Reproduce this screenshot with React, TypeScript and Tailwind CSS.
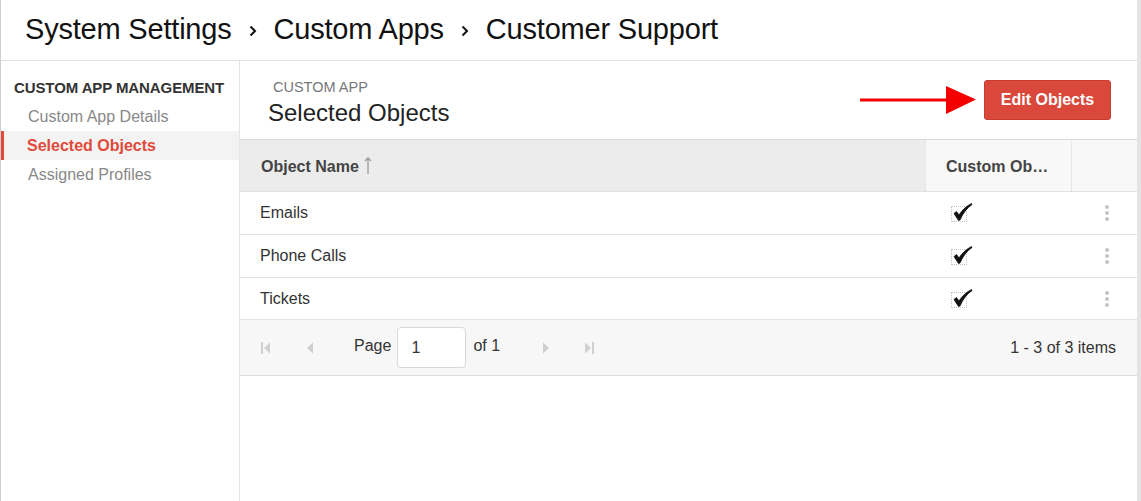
import React from 'react'

const rows = ['Emails', 'Phone Calls', 'Tickets']

function Chevron() {
  return (
    <svg width="10" height="14" viewBox="0 0 10 14" className="mx-[16px] mt-[2px]">
      <path d="M2.5 2.5 L7 7 L2.5 11.5" fill="none" stroke="#111" strokeWidth="2" />
    </svg>
  )
}

function Check() {
  return (
    <div className="relative w-[16px] h-[16px] border border-dotted border-[#c4c4c4] ml-[5px]">
      <svg width="22" height="20" viewBox="0 0 22 20" className="absolute left-[0px] -top-[5px]">
        <path
          d="M2 11.5 L4.5 9.5 L7 13 C10 8 14 4.5 19.5 1.5 L20 2.5 C15 6 11 11 8 18 L6.5 18.5 Z"
          fill="#111"
          stroke="#111"
          strokeWidth="0.8"
          strokeLinejoin="round"
        />
      </svg>
    </div>
  )
}

function Kebab() {
  return (
    <div className="flex flex-col gap-[2px] items-center">
      <span className="w-[4px] h-[4px] rounded-full bg-[#c4c4c4]" />
      <span className="w-[4px] h-[4px] rounded-full bg-[#c4c4c4]" />
      <span className="w-[4px] h-[4px] rounded-full bg-[#c4c4c4]" />
    </div>
  )
}

function PagerIcon({ kind }: { kind: 'first' | 'prev' | 'next' | 'last' }) {
  return (
    <svg width="12" height="16" viewBox="0 0 12 16">
      {kind === 'first' && (
        <>
          <rect x="1" y="2" width="2" height="12" fill="#cfcfcf" />
          <path d="M10 2.5 L4 8 L10 13.5 Z" fill="#cfcfcf" />
        </>
      )}
      {kind === 'prev' && <path d="M9 2.5 L3 8 L9 13.5 Z" fill="#cfcfcf" />}
      {kind === 'next' && <path d="M3 2.5 L9 8 L3 13.5 Z" fill="#cfcfcf" />}
      {kind === 'last' && (
        <>
          <path d="M2 2.5 L8 8 L2 13.5 Z" fill="#cfcfcf" />
          <rect x="9" y="2" width="2" height="12" fill="#cfcfcf" />
        </>
      )}
    </svg>
  )
}

export default function App() {
  return (
    <div
      className="w-[1141px] h-[501px] bg-white border-l border-[#cfcfcf] border-r-4 border-r-[#e4e4e4] flex flex-col overflow-hidden"
      style={{ fontFamily: '"Liberation Sans", Arial, sans-serif' }}
    >
      {/* Breadcrumb */}
      <div className="h-[61px] shrink-0 border-b border-[#e2e2e2] flex items-center pl-[24px] text-[29px] text-[#111] tracking-[-0.2px]">
        <span>System Settings</span>
        <Chevron />
        <span>Custom Apps</span>
        <Chevron />
        <span>Customer Support</span>
      </div>

      <div className="flex flex-1">
        {/* Sidebar */}
        <div className="w-[239px] shrink-0 border-r border-[#e4e4e4] pt-[13px]">
          <div className="h-[28px] flex items-center pl-[13px] text-[15px] font-bold text-[#333] uppercase tracking-[-0.1px]">
            Custom App Management
          </div>
          <div className="h-[29px] flex items-center pl-[27px] text-[16px] text-[#888]">Custom App Details</div>
          <div className="h-[29px] flex items-center pl-[23px] text-[16px] font-bold text-[#e04a3b] bg-[#f3f3f3] border-l-[3px] border-[#e04a3b]">
            Selected Objects
          </div>
          <div className="h-[29px] flex items-center pl-[27px] text-[16px] text-[#888]">Assigned Profiles</div>
        </div>

        {/* Main */}
        <div className="flex-1 flex flex-col">
          <div className="h-[78px] flex items-center justify-between pr-[26px]">
            <div className="pl-[28px] pt-[5px]">
              <div className="text-[14.5px] text-[#777] pl-[5px] leading-[18px]">CUSTOM APP</div>
              <div className="text-[24px] text-[#222] leading-[30px] mt-[2px]">Selected Objects</div>
            </div>
            <div className="flex items-center">
              <svg width="118" height="30" viewBox="0 0 118 30" className="mr-[6px]">
                <rect x="0" y="13.5" width="90" height="3" fill="#f40000" />
                <path d="M86 1 L116 14.5 L86 29 Z" fill="#f40000" />
              </svg>
              <button className="w-[127px] h-[40px] rounded-[3px] bg-[#d9483b] border border-[#c53d31] text-white font-bold text-[16px]">
                Edit Objects
              </button>
            </div>
          </div>

          {/* Table */}
          <div className="border-t border-[#dcdcdc]">
            <div className="h-[52px] flex text-[16px] font-bold text-[#444] border-b border-[#e2e2e2]">
              <div className="flex-1 bg-[#ececec] flex items-center pl-[21px] pt-[3px] gap-[5px]">
                Object Name
                <svg width="8" height="18" viewBox="0 0 8 18" className="-mt-[3px]">
                  <path d="M4 1 L4 17 M1 4 L4 1 L7 4" fill="none" stroke="#9a9a9a" strokeWidth="1.3" />
                </svg>
              </div>
              <div className="w-[146px] bg-[#f8f8f8] border-l border-dotted border-[#d6d6d6] flex items-center pl-[20px] pt-[3px]">
                Custom Ob…
              </div>
              <div className="w-[66px] bg-[#f8f8f8] border-l border-dotted border-[#d6d6d6]" />
            </div>
            {rows.map((r, i) => (
              <div
                key={r}
                className={`${i === 2 ? 'h-[42px]' : 'h-[43px]'} flex items-center border-b border-[#e2e2e2] text-[16px] text-[#333]`}
              >
                <div className="flex-1 pl-[20px]">{r}</div>
                <div className="w-[146px] pl-[21px] pt-[2px]">
                  <Check />
                </div>
                <div className="w-[66px] flex justify-end pr-[28px]">
                  <Kebab />
                </div>
              </div>
            ))}
            <div className="h-[56px] bg-[#f7f7f7] border-b border-[#dcdcdc] flex items-center text-[16px] text-[#333] pr-[21px]">
              <div className="w-[46px] flex justify-center pl-[6px]">
                <PagerIcon kind="first" />
              </div>
              <div className="w-[46px] flex justify-center pl-[2px]">
                <PagerIcon kind="prev" />
              </div>
              <span className="ml-[22px] -mt-[4px]">Page</span>
              <div className="ml-[6px] w-[69px] h-[41px] bg-white border border-[#d8d8d8] rounded-[4px] flex items-center pl-[13px]">
                1
              </div>
              <span className="ml-[7px] -mt-[4px]">of 1</span>
              <div className="ml-[26px] w-[40px] flex justify-center">
                <PagerIcon kind="next" />
              </div>
              <div className="w-[46px] flex justify-center">
                <PagerIcon kind="last" />
              </div>
              <span className="ml-auto">1 - 3 of 3 items</span>
            </div>
          </div>
        </div>
      </div>
    </div>
  )
}
